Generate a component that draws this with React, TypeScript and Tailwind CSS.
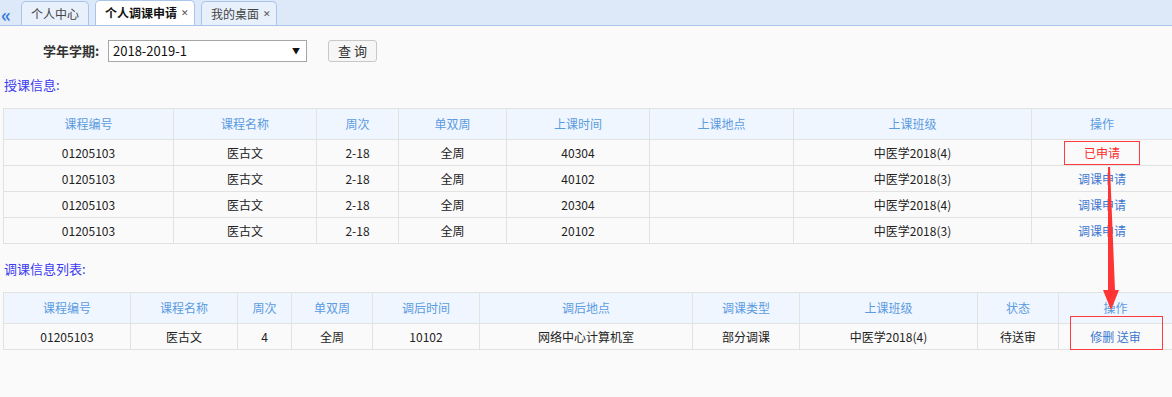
const font = { fontFamily: '"Noto Sans CJK SC", "Noto Sans", sans-serif' };

const teachHead = ["课程编号", "课程名称", "周次", "单双周", "上课时间", "上课地点", "上课班级", "操作"];
const teachCols = [170, 143, 82, 108, 143, 144, 238, 141];
const teachRows = [
  ["01205103", "医古文", "2-18", "全周", "40304", "", "中医学2018(4)"],
  ["01205103", "医古文", "2-18", "全周", "40102", "", "中医学2018(3)"],
  ["01205103", "医古文", "2-18", "全周", "20304", "", "中医学2018(4)"],
  ["01205103", "医古文", "2-18", "全周", "20102", "", "中医学2018(3)"],
];

const adjHead = ["课程编号", "课程名称", "周次", "单双周", "调后时间", "调后地点", "调课类型", "上课班级", "状态", "操作"];
const adjCols = [127, 107, 54, 81, 107, 213, 107, 178, 81, 114];
const adjRow = ["01205103", "医古文", "4", "全周", "10102", "网络中心计算机室", "部分调课", "中医学2018(4)", "待送审"];

function Tab({ label, active, close }: { label: string; active?: boolean; close?: boolean }) {
  return (
    <div
      className={
        "flex items-center gap-[4px] rounded-t-[5px] border border-b-0 border-[#a9c5ea] pl-[9px] text-[12px] " +
        (close ? "pr-[6px] " : "pr-[9px] ") +
        (active ? "h-[25px] bg-white font-bold text-[#111]" : "h-[24px] bg-[#e8f0fb] text-[#444]")
      }
    >
      <span>{label}</span>
      {close && <span className="w-[7px] text-[9px] font-normal text-[#555]">✕</span>}
    </div>
  );
}

function Head({ cells, cols }: { cells: string[]; cols: number[] }) {
  return (
    <>
      <colgroup>
        {cols.map((w, i) => (
          <col key={i} style={{ width: w }} />
        ))}
      </colgroup>
      <thead>
        <tr className="h-[31px] bg-[#eff6ff]">
          {cells.map((c) => (
            <th key={c} className="border border-[#e2e2e2] font-normal text-[#5b9be0]">
              {c}
            </th>
          ))}
        </tr>
      </thead>
    </>
  );
}

export default function App() {
  return (
    <div className="relative h-[397px] w-[1172px] overflow-hidden bg-[#fafafa] text-[12px] text-[#222]" style={font}>
      <div className="flex h-[26px] items-end gap-[6px] border-b border-[#a9c5ea] bg-[#dde9f9] pl-[1px]">
        <span className="mb-[2px] mr-[4px] text-[19px] font-bold leading-none text-[#3a7bd5]">«</span>
        <Tab label="个人中心" />
        <Tab label="个人调课申请" active close />
        <Tab label="我的桌面" close />
      </div>

      <div className="mt-[14px] flex items-center">
        <span className="ml-[43px] w-[65px] text-[13px] font-bold text-[#333]">学年学期:</span>
        <div className="flex h-[22px] w-[199px] items-center justify-between border border-[#a6a6a6] bg-white pl-[4px] pr-[6px] text-[13px] text-[#111]">
          <span>2018-2019-1</span>
          <span className="text-[8px]">▼</span>
        </div>
        <button className="ml-[21px] h-[22px] w-[49px] rounded-[3px] border border-[#c8c8c8] bg-[#f6f6f6] text-[13px] text-[#333]">
          查 询
        </button>
      </div>

      <div className="mt-[13px] ml-[4px] h-[20px] text-[13px] leading-[20px] text-[#3b3bf0]">授课信息:</div>

      <table className="mt-[13px] ml-[3px] w-[1169px] table-fixed border-collapse text-center">
        <Head cells={teachHead} cols={teachCols} />
        <tbody>
          {teachRows.map((r, i) => (
            <tr key={i} className="h-[26px]">
              {r.map((c, j) => (
                <td key={j} className="border border-[#e2e2e2]">
                  {c}
                </td>
              ))}
              <td className="border border-[#e2e2e2]">
                {i === 0 ? (
                  <span className="inline-block w-[76px] border border-[#ff3b3b] leading-[22px] text-[#ff2b2b]">已申请</span>
                ) : (
                  <span className="text-[#3d78d0]">调课申请</span>
                )}
              </td>
            </tr>
          ))}
        </tbody>
      </table>

      <div className="mt-[15px] ml-[4px] h-[20px] text-[13px] leading-[20px] text-[#3b3bf0]">调课信息列表:</div>

      <table className="mt-[13px] ml-[3px] w-[1169px] table-fixed border-collapse text-center">
        <Head cells={adjHead} cols={adjCols} />
        <tbody>
          <tr className="h-[26px]">
            {adjRow.map((c, j) => (
              <td key={j} className="border border-[#e2e2e2]">
                {c}
              </td>
            ))}
            <td className="border border-[#e2e2e2] text-[#3d78d0]">修删 送审</td>
          </tr>
        </tbody>
      </table>

      <div className="pointer-events-none absolute left-[1070px] top-[316px] h-[34px] w-[93px] border border-[#ff3b3b]" />

      <svg className="pointer-events-none absolute left-0 top-0" width="1172" height="397">
        <polygon points="1108,167 1110,167 1115,290 1119,290 1111,310 1103,290 1108,290" fill="#ff3535" />
      </svg>
    </div>
  );
}
